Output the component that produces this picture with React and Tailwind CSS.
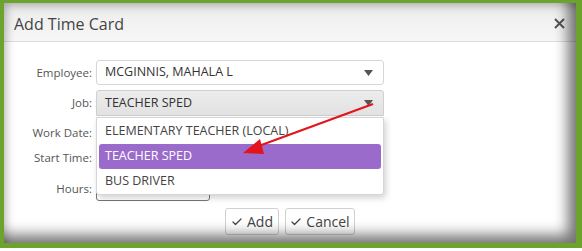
import React from 'react';
import { Check } from 'lucide-react';

const font = { fontFamily: '"Open Sans", "Liberation Sans", sans-serif' };

function Caret() {
  return (
    <svg width="9" height="6" viewBox="0 0 9 6" className="shrink-0">
      <path d="M0 0 L9 0 L4.5 6 Z" fill="#555" />
    </svg>
  );
}

function Row({ label, top, children }) {
  return (
    <div className={`flex items-center ${top}`}>
      <div className="w-[92px] pr-[4px] text-right text-[11.5px] text-[#555]">{label}</div>
      {children}
    </div>
  );
}

export default function App() {
  const jobs = ['ELEMENTARY TEACHER (LOCAL)', 'TEACHER SPED', 'BUS DRIVER'];

  return (
    <div className="relative w-[582px] h-[251px] bg-white overflow-hidden" style={font}>
      <div className="h-[248px] border-[#6ba32d] border-l-4 border-t-[3px] border-r-[6px] border-b-[5px]">
        <div className="relative h-full bg-white flex flex-col">
          {/* Header */}
          <div className="h-[39px] shrink-0 flex items-center justify-between pt-[3px] pl-[10px] pr-[10px] bg-gradient-to-b from-[#ececec] to-[#f7f7f7] border-b border-[#dcdcdc]">
            <span className="text-[16px] text-[#444]">Add Time Card</span>
            <svg width="11" height="11" viewBox="0 0 11 11" className="mr-[1px]">
              <path d="M1 1 L10 10 M10 1 L1 10" stroke="#555" strokeWidth="2" />
            </svg>
          </div>

          {/* Form */}
          <div className="relative flex flex-col pt-[18px]">
            <Row label="Employee:" top="">
              <div className="w-[288px] h-[25px] flex items-center justify-between pl-[8px] pr-[10px] bg-white border border-[#d6d6d6] rounded-[3px] text-[12.5px] text-[#333]">
                <span>MCGINNIS, MAHALA L</span>
                <Caret />
              </div>
            </Row>
            <Row label="Job:" top="mt-[5px]">
              <div className="w-[288px] h-[26px] flex items-center justify-between pl-[8px] pr-[10px] bg-gradient-to-b from-[#ececec] to-[#e2e2e2] border border-[#d0d0d0] rounded-t-[3px] text-[12.5px] text-[#333]">
                <span>TEACHER SPED</span>
                <Caret />
              </div>
            </Row>
            <Row label="Work Date:" top="mt-[4px]">
              <div className="w-[114px] h-[25px] border border-[#aaa] rounded-[3px]" />
            </Row>
            <Row label="Start Time:" top="mt-[0px]">
              <div className="w-[114px] h-[25px] border border-[#aaa] rounded-[3px]" />
            </Row>
            <Row label="Hours:" top="mt-[6px]">
              <div className="w-[114px] h-[25px] border border-[#777] rounded-[3px]" />
            </Row>

            {/* Dropdown menu */}
            <div className="absolute left-[92px] top-[75px] w-[288px] h-[78px] bg-white border border-[#d6d6d6] rounded-b-[3px] shadow-[2px_3px_6px_rgba(0,0,0,0.18)] px-[2px] py-[1px] text-[12.5px]">
              {jobs.map((j, i) => (
                <div
                  key={j}
                  className={`h-[25px] flex items-center pl-[6px] rounded-[3px] ${i === 1 ? 'bg-[#9a6bcb] text-white' : 'text-[#444]'}`}
                >
                  {j}
                </div>
              ))}
            </div>

            {/* Buttons */}
            <div className="flex justify-center gap-[6px] mt-[7px]">
              <button className="h-[27px] w-[54px] flex items-center justify-center gap-[4px] bg-white border border-[#d0d0d0] rounded-[3px] text-[14px] text-[#444]">
                <Check size={12} strokeWidth={2.5} />
                Add
              </button>
              <button className="h-[27px] w-[70px] flex items-center justify-center gap-[4px] bg-white border border-[#d0d0d0] rounded-[3px] text-[14px] text-[#444]">
                <Check size={12} strokeWidth={2.5} />
                Cancel
              </button>
            </div>
          </div>

          {/* inner vignette */}
          <div className="absolute inset-0 pointer-events-none shadow-[inset_-14px_-14px_14px_-6px_rgba(0,0,0,0.55),inset_8px_8px_10px_-6px_rgba(0,0,0,0.3)]" />
        </div>
      </div>

      {/* Red annotation arrow */}
      <svg className="absolute inset-0 pointer-events-none" width="582" height="251">
        <line x1="373" y1="104" x2="256" y2="147" stroke="#e3151b" strokeWidth="2.2" />
        <path d="M243 153 L260 139 L264 154 Z" fill="#e3151b" />
      </svg>
    </div>
  );
}
